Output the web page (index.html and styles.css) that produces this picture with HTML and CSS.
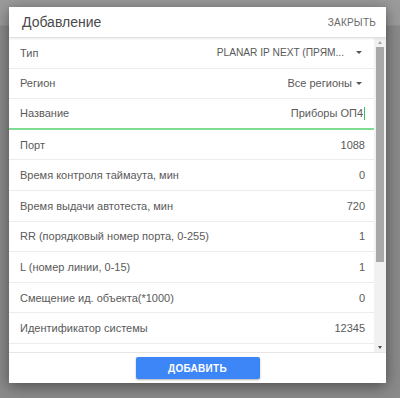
FILE: index.html
```html
<!DOCTYPE html>
<html lang="ru">
<head>
    <meta charset="UTF-8">
    <title>Добавление</title>
    <link rel="stylesheet" href="styles.css">
</head>
<body>
    <div class="backdrop">
        <div class="modal">
            <div class="modal-header">
                <div class="modal-title">Добавление</div>
                <div class="close-btn">ЗАКРЫТЬ</div>
            </div>

            <div class="modal-body">
                <div class="fields">
                    <div class="field">
                        <div class="field-label">Тип</div>
                        <div class="select">
                            <span class="select-text select-text-long">PLANAR IP NEXT (ПРЯМ...</span>
                            <span class="caret"></span>
                        </div>
                    </div>
                    <div class="field">
                        <div class="field-label">Регион</div>
                        <div class="select">
                            <span class="select-text">Все регионы</span>
                            <span class="caret"></span>
                        </div>
                    </div>
                    <div class="field field-active">
                        <div class="field-label">Название</div>
                        <div class="field-value">Приборы ОП4<span class="cursor"></span></div>
                    </div>
                    <div class="field">
                        <div class="field-label">Порт</div>
                        <div class="field-value">1088</div>
                    </div>
                    <div class="field">
                        <div class="field-label">Время контроля таймаута, мин</div>
                        <div class="field-value">0</div>
                    </div>
                    <div class="field">
                        <div class="field-label">Время выдачи автотеста, мин</div>
                        <div class="field-value">720</div>
                    </div>
                    <div class="field">
                        <div class="field-label">RR (порядковый номер порта, 0-255)</div>
                        <div class="field-value">1</div>
                    </div>
                    <div class="field">
                        <div class="field-label">L (номер линии, 0-15)</div>
                        <div class="field-value">1</div>
                    </div>
                    <div class="field">
                        <div class="field-label">Смещение ид. объекта(*1000)</div>
                        <div class="field-value">0</div>
                    </div>
                    <div class="field">
                        <div class="field-label">Идентификатор системы</div>
                        <div class="field-value">12345</div>
                    </div>
                    <div class="field"></div>
                </div>

                <div class="scrollbar">
                    <div class="scroll-arrow scroll-up"></div>
                    <div class="scroll-track">
                        <div class="scroll-thumb"></div>
                    </div>
                    <div class="scroll-arrow scroll-down"></div>
                </div>
            </div>

            <div class="modal-footer">
                <div class="add-btn">ДОБАВИТЬ</div>
            </div>
        </div>
    </div>
</body>
</html>
```

FILE: styles.css
```css
* {
    margin: 0;
    padding: 0;
    box-sizing: border-box;
}

body {
    background-color: #8b8b8b;
    width: 400px;
    height: 398px;
    overflow: hidden;
    font-family: 'Liberation Sans', Arial, sans-serif;
    color: #5a5a5a;
}

.backdrop {
    padding: 7px 0 0 9px;
    background: linear-gradient(to bottom, #9b9b9b 0, #9b9b9b 25px, #8a8a8a 26px, #8a8a8a 100%);
    height: 100%;
}

.modal {
    width: 377px;
    height: 376px;
    background: #fff;
    display: flex;
    flex-direction: column;
    box-shadow: 0 3px 14px rgba(0, 0, 0, 0.45);
}

.modal-header {
    height: 31px;
    display: flex;
    justify-content: space-between;
    align-items: center;
    padding: 0 10px 0 13px;
    border-bottom: 1px solid #e2e2e2;
    box-shadow: 0 1px 2px rgba(0, 0, 0, 0.08);
    position: relative;
    z-index: 1;
}

.modal-title {
    font-size: 14px;
    color: #4a4a4a;
}

.close-btn {
    font-size: 10px;
    color: #6a6a6a;
    letter-spacing: 0.2px;
}

.modal-body {
    height: 314px;
    display: flex;
}

.fields {
    flex: 1;
    overflow: hidden;
}

.field {
    height: 30.6px;
    display: flex;
    justify-content: space-between;
    align-items: center;
    padding: 0 9px 0 11px;
    border-bottom: 1px solid #ececec;
    font-size: 11px;
}

.field-active {
    border-bottom: 2px solid #7fdc90;
}

.field-label {
    color: #5a5a5a;
}

.field-value {
    color: #5a5a5a;
    display: flex;
    align-items: center;
}

.cursor {
    display: inline-block;
    width: 1px;
    height: 13px;
    background: #3cbf5a;
    margin-left: 1px;
}

.select {
    display: flex;
    align-items: center;
    margin-right: 3px;
}

.select-text-long {
    white-space: nowrap;
    font-size: 10.2px;
    margin-right: 8px;
}

.caret {
    width: 0;
    height: 0;
    margin-left: 4px;
    border-left: 3px solid transparent;
    border-right: 3px solid transparent;
    border-top: 3px solid #555;
}

.scrollbar {
    width: 12px;
    background: #f1f1f1;
    display: flex;
    flex-direction: column;
}

.scroll-arrow {
    height: 9px;
    display: flex;
    justify-content: center;
    align-items: center;
}

.scroll-up::after,
.scroll-down::after {
    content: '';
    width: 0;
    height: 0;
    border-left: 2.5px solid transparent;
    border-right: 2.5px solid transparent;
}

.scroll-up::after {
    border-bottom: 3px solid #a3a3a3;
}

.scroll-down::after {
    border-top: 3px solid #505050;
}

.scroll-track {
    flex: 1;
    padding: 0 2px;
}

.scroll-thumb {
    height: 215px;
    background: #a8a8a8;
}

.modal-footer {
    flex: 1;
    border-top: 1px solid #e6e6e6;
    display: flex;
    justify-content: center;
    align-items: center;
}

.add-btn {
    width: 124px;
    height: 22px;
    background: #3d86f8;
    border-radius: 2px;
    color: #fff;
    font-size: 10px;
    font-weight: bold;
    letter-spacing: 0.3px;
    display: flex;
    justify-content: center;
    align-items: center;
    box-shadow: 0 1px 2px rgba(0, 0, 0, 0.3);
}
```
